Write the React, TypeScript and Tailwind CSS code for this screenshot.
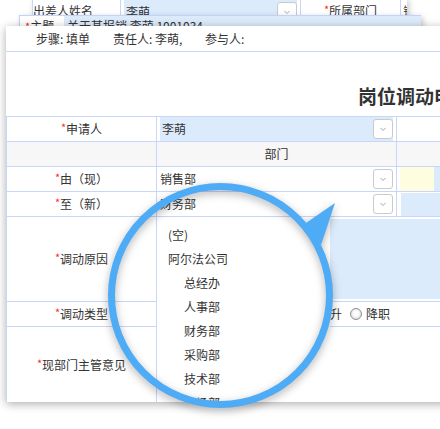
import React from "react";

const line = "border-[#c9d6fb]";

function SelBtn() {
  return (
    <span className="flex h-[20px] w-[20px] shrink-0 items-center justify-center rounded-[3px] border border-[#cacaca] bg-white">
      <svg width="10" height="10" viewBox="0 0 10 10">
        <path d="M2.5 4 L5 6.5 L7.5 4" fill="none" stroke="#a8a8a8" strokeWidth="1" />
      </svg>
    </span>
  );
}

function Radio() {
  return (
    <span className="h-[12px] w-[12px] shrink-0 rounded-full border border-[#8f8f8f] bg-[radial-gradient(circle_at_50%_45%,#ffffff_25%,#cfcfcf_100%)]" />
  );
}

function Label({ text, h }: { text: string; h: string }) {
  return (
    <div className={`flex items-center justify-center border-b border-r ${line} ${h}`}>
      <span className="relative top-[-2px] text-[11px] text-[#ff2a2a]">*</span>
      {text}
    </div>
  );
}

const depts = [
  { name: "(空)", sub: false },
  { name: "阿尔法公司", sub: false },
  { name: "总经办", sub: true },
  { name: "人事部", sub: true },
  { name: "财务部", sub: true },
  { name: "采购部", sub: true },
  { name: "技术部", sub: true },
  { name: "市场部", sub: true },
];

export default function App() {
  return (
    <div className="relative h-[429px] w-[440px] overflow-hidden bg-white font-['Noto_Sans_CJK_SC','Microsoft_YaHei',sans-serif] text-[12px] leading-[14px] text-[#333]">
      {/* back sheet */}
      <div className={`absolute left-[32px] top-[-2px] flex h-[25px] w-[375px] overflow-hidden border-l ${line} bg-white shadow-[2px_2px_6px_rgba(0,0,0,0.22)]`}>
        <div className={`flex w-[88px] shrink-0 items-center border-r ${line} whitespace-nowrap`}>出差人姓名</div>
        <div className={`flex w-[180px] shrink-0 border-r ${line} px-[3px] pt-[2px]`}>
          <div className="flex flex-1 items-center justify-between bg-[#dcebfb] pl-[2px]">
            <span>李萌</span>
            <SelBtn />
          </div>
        </div>
        <div className={`flex w-[100px] shrink-0 items-center justify-center border-r ${line}`}>
          <span className="relative top-[-2px] text-[11px] text-[#ff2a2a]">*</span>所属部门
        </div>
        <div className="flex shrink-0 items-center whitespace-nowrap pl-[2px]">销售部</div>
      </div>

      {/* middle sheet */}
      <div className="absolute left-[19px] top-[15px] flex h-[30px] w-[402px] border-l border-t border-[#c3d2f7] bg-white shadow-[2px_2px_6px_rgba(0,0,0,0.22)]">
        <div className="w-[44px] shrink-0 pl-[5px] pt-[3px]">
          <span className="text-[11px] text-[#ff2a2a]">*</span>主题
        </div>
        <div className="flex-1 bg-[#dcebfb] pl-[3px] pt-[3px] whitespace-nowrap">关于某报销 李萌 1001034</div>
      </div>

      {/* front sheet */}
      <div className="absolute left-[6px] top-[26px] h-[376px] w-[460px] overflow-hidden bg-white shadow-[0_2px_9px_rgba(0,0,0,0.32)]">
        <div className={`flex h-[26px] items-center border-b ${line} pl-[30px] whitespace-nowrap`}>
          <span className="w-[77px]">步骤: 填单</span>
          <span className="w-[92px]">责任人: 李萌,</span>
          <span>参与人:</span>
        </div>
        <div className="h-[64px] whitespace-nowrap pl-[352px] pt-[33px] text-[19px] font-bold leading-[22px] text-[#333]">
          岗位调动申请单
        </div>

        <div className={`grid grid-cols-[150px_240px_1fr] border-l border-t ${line}`}>
          <Label text="申请人" h="h-[25px]" />
          <div className={`flex border-b border-r ${line} px-[3px]`}>
            <div className="flex flex-1 items-center justify-between bg-[#dcebfb] pl-[2px]">
              <span>李萌</span>
              <SelBtn />
            </div>
          </div>
          <div className={`border-b ${line}`} />

          <div className={`h-[25px] border-b border-r ${line} bg-[#f7f7f7]`} />
          <div className={`flex items-center justify-center border-b border-r ${line} bg-[#f7f7f7]`}>部门</div>
          <div className={`border-b ${line} bg-[#f7f7f7]`} />

          <Label text="由（现）" h="h-[25px]" />
          <div className={`flex items-center justify-between border-b border-r ${line} pl-[3px] pr-[3px]`}>
            <span>销售部</span>
            <SelBtn />
          </div>
          <div className={`flex border-b ${line} pl-[3px]`}>
            <div className="w-[34px] bg-[#fffde0]" />
            <div className="flex-1 bg-[#dcebfb]" />
          </div>

          <Label text="至（新）" h="h-[25px]" />
          <div className={`flex items-center justify-between border-b border-r ${line} pl-[3px] pr-[3px]`}>
            <span>财务部</span>
            <SelBtn />
          </div>
          <div className={`flex border-b ${line} pl-[4px] pt-[1px]`}>
            <div className="flex-1 bg-[#dcebfb]" />
          </div>

          <Label text="调动原因" h="h-[85px]" />
          <div className={`col-span-2 flex border-b ${line} p-[2px]`}>
            <div className="flex-1 bg-[#dcebfb]" />
          </div>

          <Label text="调动类型" h="h-[25px]" />
          <div className={`col-span-2 flex items-center border-b ${line} pl-[49px] whitespace-nowrap`}>
            {["平调", "轮岗", "晋升", "降职"].map((t) => (
              <span key={t} className="mr-[8px] flex items-center gap-[4px]">
                <Radio />
                {t}
              </span>
            ))}
          </div>

          <Label text="现部门主管意见" h="h-[76px]" />
          <div className="col-span-2" />
        </div>

        {/* open department list */}
        <div className={`absolute bottom-0 left-[150px] top-[191px] w-[174px] border-l ${line} bg-white pl-[11px] pt-[6px] leading-[24px]`}>
          {depts.map((d) => (
            <div key={d.name} className={d.sub ? "pl-[16px]" : ""}>
              {d.name}
            </div>
          ))}
        </div>
      </div>

      {/* magnifier callout */}
      <svg
        className="pointer-events-none absolute left-[100px] top-[175px] drop-shadow-[0_3px_4px_rgba(0,0,0,0.3)]"
        width="250"
        height="245"
        viewBox="0 0 250 245"
      >
        <polygon points="206,48 235,28 221,70" fill="#4eabf6" />
        <circle cx="120.5" cy="120.5" r="109" fill="none" stroke="#4eabf6" strokeWidth="7" />
      </svg>
    </div>
  );
}
